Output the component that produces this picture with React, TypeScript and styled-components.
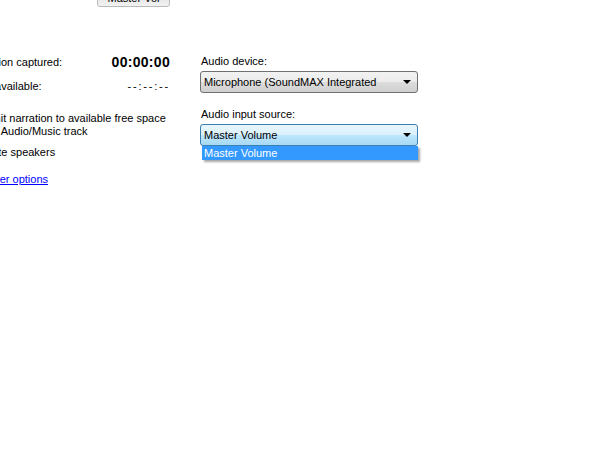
import React from 'react'
import styled, { createGlobalStyle } from 'styled-components'

const GlobalStyle = createGlobalStyle`
  html, body {
    margin: 0;
    padding: 0;
    background: #ffffff;
    overflow: hidden;
  }
  body {
    font-family: "Liberation Sans", Arial, sans-serif;
    font-size: 11px;
    color: #000000;
  }
`

const Page = styled.div`
  width: 614px;
  height: 460px;
  display: flex;
  flex-direction: column;
`

const TopBar = styled.div`
  display: flex;
  padding-left: 97px;
  margin-top: -15px;
`

const TopButton = styled.button`
  width: 73px;
  height: 22px;
  box-sizing: border-box;
  border: 1px solid #b9b9b9;
  border-radius: 3px;
  background: linear-gradient(#f6f6f6 0%, #efefef 50%, #e4e4e4 51%, #f2f2f2 100%);
  font: inherit;
  line-height: 13px;
  color: #000;
  padding: 6px 0 0;
  display: flex;
  justify-content: center;
  align-items: flex-start;
`

const Columns = styled.div`
  display: flex;
  gap: 30px;
  margin-top: 47px;
`

const LeftPanel = styled.div`
  width: 218px;
  margin-left: -48px;
  display: flex;
  flex-direction: column;
`

const StatRow = styled.div<{ $gap?: number }>`
  display: flex;
  justify-content: space-between;
  align-items: center;
  height: 16px;
  padding-left: 16px;
  margin-top: ${p => p.$gap ?? 0}px;
`

const StatValue = styled.span<{ $big?: boolean }>`
  font-weight: ${p => (p.$big ? 'bold' : 'normal')};
  font-size: ${p => (p.$big ? '14px' : '11px')};
  letter-spacing: ${p => (p.$big ? '0.3px' : '1.8px')};
`

const CheckRow = styled.label<{ $gap: number }>`
  display: flex;
  align-items: flex-start;
  gap: 5px;
  padding-left: 13px;
  margin-top: ${p => p.$gap}px;
  line-height: 13px;
`

const Box = styled.span`
  flex: none;
  width: 11px;
  height: 11px;
  border: 1px solid #8f8f8f;
  background: linear-gradient(135deg, #dcdcdc, #ffffff);
`

const LinkText = styled.a`
  margin-top: 14px;
  line-height: 13px;
  color: #0000ff;
  text-decoration: underline;
`

const RightPanel = styled.div`
  width: 218px;
  display: flex;
  flex-direction: column;
`

const FieldLabel = styled.div<{ $gap?: number }>`
  line-height: 14px;
  margin-top: ${p => p.$gap ?? 0}px;
  padding-left: 1px;
`

const SelectBox = styled.div<{ $active?: boolean }>`
  position: relative;
  margin-top: 3px;
  height: 22px;
  box-sizing: border-box;
  display: flex;
  align-items: center;
  justify-content: space-between;
  padding: 0 6px 0 3px;
  border: 1px solid ${p => (p.$active ? '#3c7fb1' : '#707070')};
  border-radius: 3px;
  background: ${p =>
    p.$active
      ? 'linear-gradient(#eaf6fd 0%, #d9f0fc 50%, #bee6fd 51%, #a7d9f5 100%)'
      : 'linear-gradient(#f2f2f2 0%, #ebebeb 50%, #dddddd 51%, #cfcfcf 100%)'};
`

const Arrow = styled.span`
  width: 0;
  height: 0;
  border-left: 4px solid transparent;
  border-right: 4px solid transparent;
  border-top: 4px solid #000;
`

const DropList = styled.div`
  position: absolute;
  top: 21px;
  left: 1px;
  right: -1px;
  height: 14px;
  background: #3399ff;
  color: #ffffff;
  line-height: 14px;
  padding-left: 2px;
  box-shadow: 2px 2px 2px rgba(0, 0, 0, 0.35);
`

export default function App() {
  return (
    <Page>
      <GlobalStyle />
      <TopBar>
        <TopButton>Master Vol</TopButton>
      </TopBar>
      <Columns>
        <LeftPanel>
          <StatRow>
            <span>Narration captured:</span>
            <StatValue $big>00:00:00</StatValue>
          </StatRow>
          <StatRow $gap={8}>
            <span>Time available:</span>
            <StatValue>--:--:--</StatValue>
          </StatRow>
          <CheckRow $gap={18}>
            <Box />
            <span>
              Limit narration to available free space
              <br />
              on&nbsp; Audio/Music track
            </span>
          </CheckRow>
          <CheckRow $gap={8}>
            <Box />
            <span>Mute speakers</span>
          </CheckRow>
          <LinkText href="#">Show fewer options</LinkText>
        </LeftPanel>
        <RightPanel>
          <FieldLabel>Audio device:</FieldLabel>
          <SelectBox>
            <span>Microphone (SoundMAX Integrated</span>
            <Arrow />
          </SelectBox>
          <FieldLabel $gap={14}>Audio input source:</FieldLabel>
          <SelectBox $active>
            <span>Master Volume</span>
            <Arrow />
            <DropList>Master Volume</DropList>
          </SelectBox>
        </RightPanel>
      </Columns>
    </Page>
  )
}
